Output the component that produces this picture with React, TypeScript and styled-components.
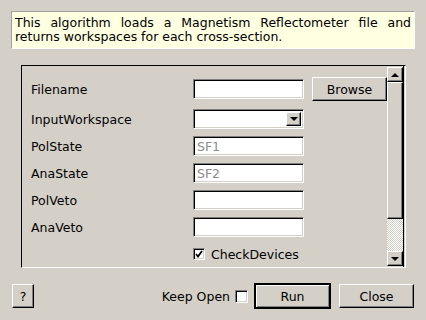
import React from 'react'
import styled, { createGlobalStyle, css } from 'styled-components'

const GlobalStyle = createGlobalStyle`
  html, body {
    margin: 0;
    padding: 0;
    background: #d4d0c8;
  }
  body {
    font-family: "DejaVu Sans", "Liberation Sans", sans-serif;
    font-size: 12.5px;
    color: #000;
  }
`

const raised = css`
  border: 1px solid;
  border-color: #fff #000 #000 #fff;
  box-shadow: inset -1px -1px #808080;
  background: #d4d0c8;
`

const sunken = css`
  border: 1px solid;
  border-color: #808080 #fff #fff #808080;
  box-shadow: inset 1px 1px #000, inset -1px -1px #d4d0c8;
`

const Dialog = styled.div`
  width: 426px;
  height: 320px;
  box-sizing: border-box;
  padding: 11px 11px 0 11px;
  display: flex;
  flex-direction: column;
`

const Description = styled.div`
  width: 404px;
  height: 38px;
  box-sizing: border-box;
  border: 1px solid;
  border-color: #a0a0a0 #fff #fff #a0a0a0;
  background: #ffffe1;
  padding: 4px 3px 4px 3px;
  line-height: 14px;
`

const DescLine = styled.div<{ $justify?: boolean }>`
  white-space: nowrap;
  ${p =>
    p.$justify &&
    css`
      white-space: normal;
      text-align: justify;
      text-align-last: justify;
    `}
`

const Frame = styled.div`
  margin: 16px 0 0 10px;
  width: 385px;
  height: 203px;
  box-sizing: border-box;
  border: 1px solid;
  border-color: #000 #fff #fff #000;
  display: flex;
`

const Form = styled.div`
  flex: 1;
  padding: 11px 0 0 9px;
  display: flex;
  flex-direction: column;
  gap: 7px;
`

const Row = styled.div<{ $h: number; $extra?: number }>`
  height: ${p => p.$h}px;
  margin-bottom: ${p => p.$extra || 0}px;
  display: flex;
  align-items: center;
`

const Label = styled.div`
  width: 162px;
  flex-shrink: 0;
`

const TextInput = styled.input`
  width: 111px;
  height: 20px;
  box-sizing: border-box;
  ${sunken};
  background: #fff;
  padding: 0 3px;
  margin: 0;
  font-family: inherit;
  font-size: 12.5px;
  outline: none;
  &::placeholder {
    color: #8c8c8c;
  }
`

const Combo = styled.div`
  width: 111px;
  height: 20px;
  box-sizing: border-box;
  ${sunken};
  background: #fff;
  display: flex;
  justify-content: flex-end;
  padding: 2px;
`

const ComboButton = styled.div`
  width: 15px;
  box-sizing: border-box;
  ${raised};
  display: flex;
  align-items: center;
  justify-content: center;
`

const Arrow = styled.span<{ $up?: boolean }>`
  width: 0;
  height: 0;
  border-left: 4px solid transparent;
  border-right: 4px solid transparent;
  ${p => (p.$up ? 'border-bottom: 4px solid #000;' : 'border-top: 4px solid #000;')}
`

const Button = styled.button<{ $w: number; $default?: boolean }>`
  width: ${p => p.$w}px;
  height: 24px;
  box-sizing: border-box;
  ${raised};
  font-family: inherit;
  font-size: 12.5px;
  color: #000;
  padding: 0;
  margin: 0;
  ${p =>
    p.$default &&
    css`
      height: 26px;
      outline: none;
      border: 2px solid;
      border-color: #000;
      box-shadow: inset 1px 1px #fff, inset -1px -1px #808080;
    `}
`

const BrowseButton = styled(Button)`
  margin-left: 8px;
`

const CheckBox = styled.span`
  width: 12px;
  height: 12px;
  box-sizing: border-box;
  ${sunken};
  background: #fff;
  display: inline-flex;
  align-items: center;
  justify-content: center;
  flex-shrink: 0;
`

const CheckLabel = styled.span`
  margin-left: 6px;
`

const ScrollBar = styled.div`
  width: 16px;
  padding: 1px 0 1px 0;
  margin-right: 1px;
  display: flex;
  flex-direction: column;
  border-right: 1px solid #000;
`

const ScrollButton = styled.div`
  height: 15px;
  box-sizing: border-box;
  ${raised};
  display: flex;
  align-items: center;
  justify-content: center;
`

const Thumb = styled.div`
  height: 137px;
  box-sizing: border-box;
  ${raised};
`

const Trough = styled.div`
  flex: 1;
  background-color: #d4d0c8;
  background-image: repeating-conic-gradient(#fff 0 25%, #d4d0c8 0 50%);
  background-size: 2px 2px;
`

const Footer = styled.div`
  margin-top: 15px;
  display: flex;
  align-items: center;
  height: 26px;
`

const HelpButton = styled(Button)`
  margin-left: 1px;
`

const Spacer = styled.div`
  flex: 1;
`

const KeepOpen = styled.span`
  margin-right: 5px;
`

const FooterCheck = styled(CheckBox)`
  width: 13px;
  height: 13px;
  margin-right: 6px;
`

const CloseButton = styled(Button)`
  margin-left: 8px;
  margin-right: 1px;
`

const CheckMark = () => (
  <svg width="8" height="8" viewBox="0 0 8 8">
    <path d="M1 4 L3 6.5 L7 1" stroke="#000" strokeWidth="1.8" fill="none" />
  </svg>
)

const fields = [
  { label: 'PolState', placeholder: 'SF1' },
  { label: 'AnaState', placeholder: 'SF2' },
  { label: 'PolVeto', placeholder: '' },
  { label: 'AnaVeto', placeholder: '' },
]

const App = () => {
  return (
    <Dialog>
      <GlobalStyle />
      <Description>
        <DescLine $justify>This algorithm loads a Magnetism Reflectometer file and</DescLine>
        <DescLine>returns workspaces for each cross-section.</DescLine>
      </Description>
      <Frame>
        <Form>
          <Row $h={24} $extra={1}>
            <Label>Filename</Label>
            <TextInput />
            <BrowseButton $w={75}>Browse</BrowseButton>
          </Row>
          <Row $h={20}>
            <Label>InputWorkspace</Label>
            <Combo>
              <ComboButton>
                <Arrow />
              </ComboButton>
            </Combo>
          </Row>
          {fields.map(f => (
            <Row $h={20} key={f.label}>
              <Label>{f.label}</Label>
              <TextInput placeholder={f.placeholder} />
            </Row>
          ))}
          <Row $h={20}>
            <Label />
            <CheckBox>
              <CheckMark />
            </CheckBox>
            <CheckLabel>CheckDevices</CheckLabel>
          </Row>
        </Form>
        <ScrollBar>
          <ScrollButton>
            <Arrow $up />
          </ScrollButton>
          <Thumb />
          <Trough />
          <ScrollButton>
            <Arrow />
          </ScrollButton>
        </ScrollBar>
      </Frame>
      <Footer>
        <HelpButton $w={22}>?</HelpButton>
        <Spacer />
        <KeepOpen>Keep Open</KeepOpen>
        <FooterCheck />
        <Button $w={77} $default>Run</Button>
        <CloseButton $w={75}>Close</CloseButton>
      </Footer>
    </Dialog>
  )
}

export default App
